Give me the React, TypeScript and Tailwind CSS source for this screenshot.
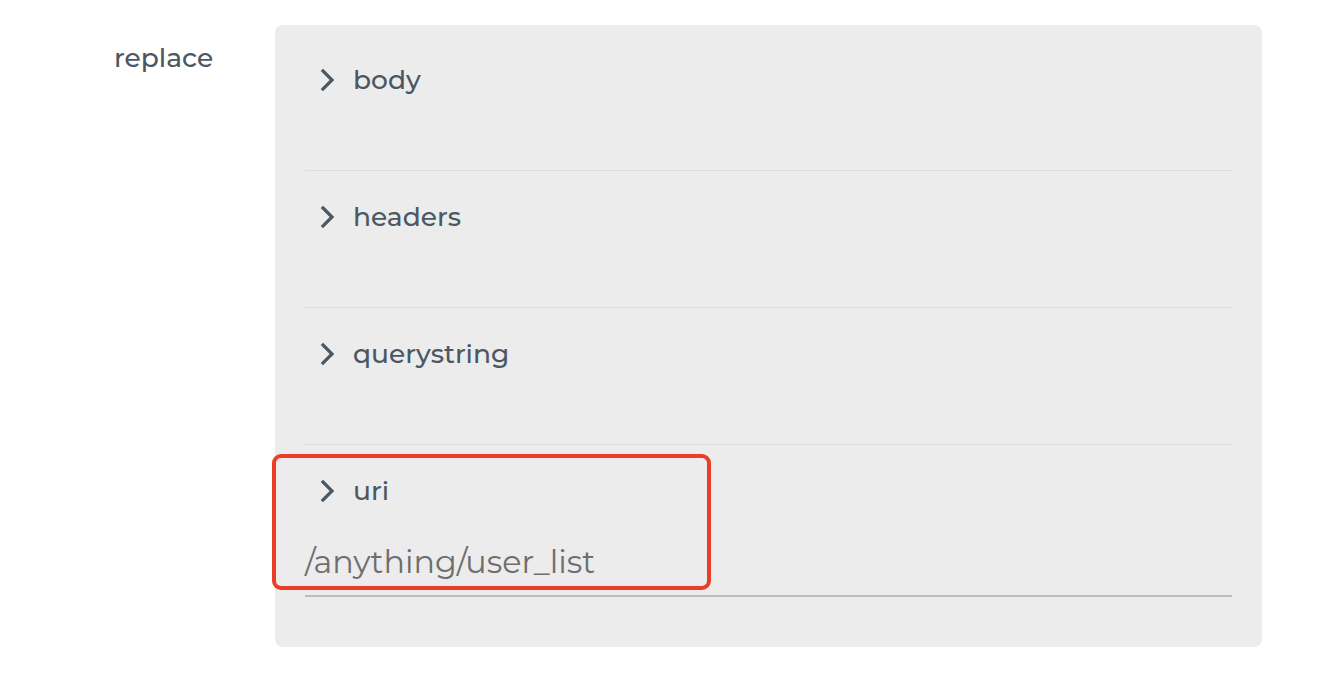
const sections = ["body", "headers", "querystring"];

function Chevron() {
  return (
    <svg className="w-[16px] h-[24px] ml-[15px] mr-[17px] shrink-0" viewBox="0 0 16 24" fill="none">
      <path d="M3 3 L12 12 L3 21" stroke="#4b5863" strokeWidth="3.2" strokeLinecap="square" strokeLinejoin="miter" />
    </svg>
  );
}

export default function App() {
  return (
    <div
      className="w-[1342px] h-[676px] bg-white flex pt-[25px]"
      style={{ fontFamily: "Montserrat, 'Open Sans', 'Noto Sans', sans-serif" }}
    >
      <div className="w-[275px] pl-[114px] pt-[16px] text-[26.5px] leading-[34px] font-medium text-[#4b5863]">
        replace
      </div>
      <div className="w-[987px] h-[622px] bg-[#ececec] rounded-[8px] px-[30px] pt-[9px]">
        {sections.map((s) => (
          <div key={s} className="h-[137px] border-b border-[#dcdcdc] pt-[30px]">
            <div className="flex items-center h-[32px] text-[26.5px] font-medium text-[#4b5863]">
              <Chevron />
              <span>{s}</span>
            </div>
          </div>
        ))}
        <div className="relative pt-[30px]">
          <div className="absolute left-[-33px] top-[9px] w-[439px] h-[136px] border-4 border-[#ea3f26] rounded-[9px]" />
          <div className="flex items-center h-[32px] text-[26.5px] font-medium text-[#4b5863]">
            <Chevron />
            <span>uri</span>
          </div>
          <div className="mt-[22px] h-[68px] border-b-2 border-[#bcbcbc] flex items-center text-[31.8px] text-[#6e6e6e]">
            /anything/user_list
          </div>
        </div>
      </div>
    </div>
  );
}
